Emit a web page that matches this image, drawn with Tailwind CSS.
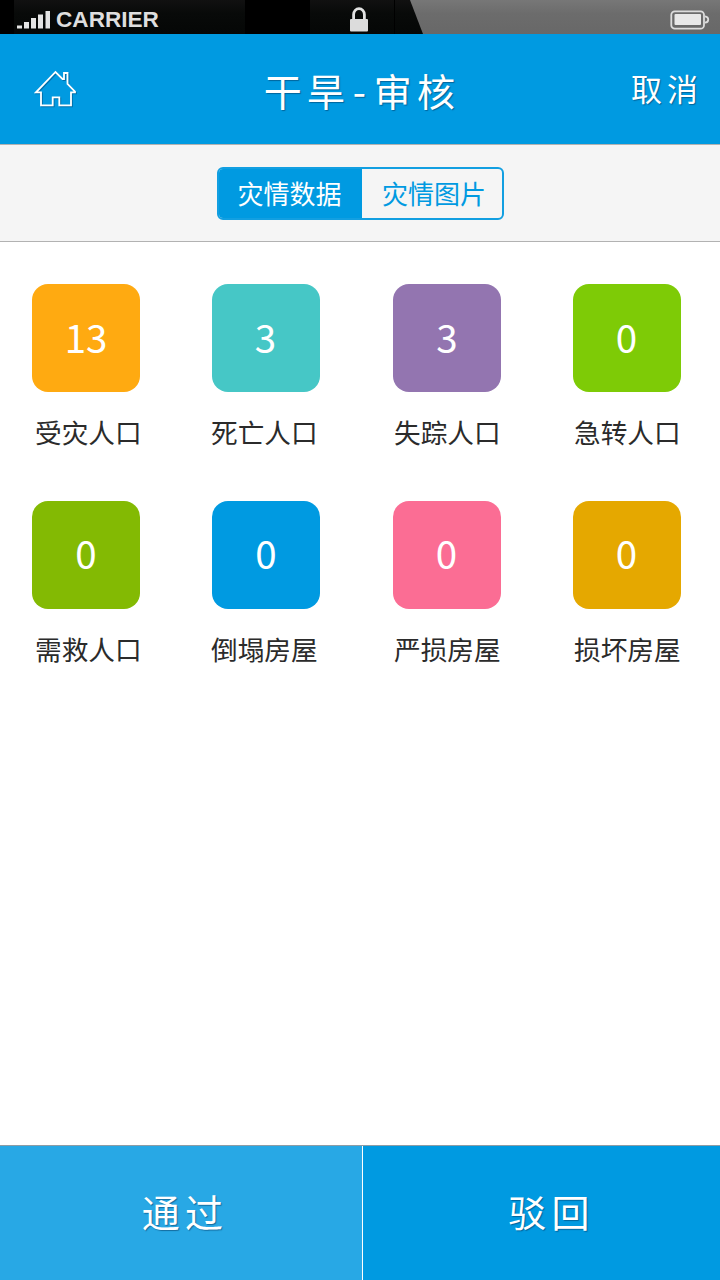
<!DOCTYPE html>
<html lang="zh-CN">
<head>
<meta charset="utf-8">
<meta name="viewport" content="width=720">
<title>干旱-审核</title>
<script src="https://cdn.jsdelivr.net/npm/@tailwindcss/browser@4"></script>
</head>
<body class="w-[720px] h-[1280px] flex flex-col overflow-hidden bg-white font-['Noto_Sans_CJK_SC',sans-serif]">

  <!-- Status bar -->
  <div class="grid h-[34px] shrink-0 grid-cols-1 grid-rows-1 bg-black">
    <svg class="col-start-1 row-start-1" width="720" height="34" viewBox="0 0 720 34">
      <defs>
        <linearGradient id="gray" x1="0" y1="0" x2="0" y2="1"><stop offset="0" stop-color="#777"/><stop offset=".4" stop-color="#6c6c6c"/><stop offset="1" stop-color="#686868"/></linearGradient>
        <linearGradient id="dark" x1="0" y1="0" x2="0" y2="1"><stop offset="0" stop-color="#111"/><stop offset=".4" stop-color="#080a09"/><stop offset="1" stop-color="#050706"/></linearGradient>
      </defs>
      <rect x="14" width="231" height="34" fill="url(#dark)"/>
      <rect x="310" width="113" height="34" fill="url(#dark)"/>
      <path d="M394.500 0V34" stroke="#000"/>
      <path d="M410 0H720V34H423Z" fill="url(#gray)"/>
    </svg>
    <div class="col-start-1 row-start-1 grid grid-cols-[333px_1fr_40px] items-start pl-4 pr-[10px]">
      <div class="flex gap-[5px]">
        <svg class="mt-[10px]" width="35" height="19" viewBox="0 0 35 19" fill="#e4e4e4">
          <rect x="1" y="15.500" width="5" height="3"/><rect x="8" y="12" width="5" height="6.500"/><rect x="15" y="8" width="5" height="10.500"/><rect x="22" y="4.500" width="5" height="14"/><rect x="29.500" y="1" width="4.500" height="17.500"/>
        </svg>
        <span class="mt-[8px] font-['Liberation_Sans',sans-serif] text-[22.6px] leading-[23px] font-bold text-[#dedede]">CARRIER</span>
      </div>
      <svg class="mt-[7px]" width="20" height="25" viewBox="0 0 20 25">
        <path d="M4.600 13V7.500a5.400 5.800 0 0 1 10.800 0V13" fill="none" stroke="#e2e2e2" stroke-width="2.800"/>
        <rect x="1" y="12" width="18" height="12.500" rx="1" fill="#dcdcdc"/>
      </svg>
      <svg class="mt-[9px]" width="40" height="22" viewBox="0 0 40 22">
        <rect x="1.300" y="2.300" width="32.700" height="17.400" rx="3.500" fill="none" stroke="#dcdcdc" stroke-width="1.800"/>
        <rect x="4.500" y="5" width="26.500" height="11" rx="1" fill="#e8e8e8"/>
        <path d="M35 7.300c4.300 .4 4.300 6 0 6.400" fill="none" stroke="#dcdcdc" stroke-width="1.800"/>
      </svg>
    </div>
  </div>

  <!-- Title bar -->
  <header class="grid h-[110px] shrink-0 grid-cols-[200px_1fr_200px] items-center bg-[#009ae1] text-white">
    <svg class="ml-[34px] drop-shadow-[1px_1px_0_rgba(0,50,90,0.4)]" width="44" height="40" viewBox="0 0 44 40" fill="none" stroke="#fff" stroke-width="1.800">
      <path d="M7 23.300H2L21.500 3L28.500 10H30V4H33.500V15L41 22.500V23.300H37V36.300H25.300V28.300H18.700V36.300H7Z"/>
    </svg>
    <h1 class="pl-[4px] pt-[2px] text-center text-[38px] leading-[44px] tracking-[5.300px] [text-shadow:1px_1px_1px_rgba(0,50,90,0.5)]">干旱<span class="mx-[2.500px]">-</span>审核</h1>
    <button class="pr-[17px] pb-[2px] text-right text-[31px] leading-[44px] tracking-[5px] [text-shadow:1px_1px_1px_rgba(0,50,90,0.5)]">取消</button>
  </header>

  <!-- Tabs -->
  <nav class="flex h-[98px] shrink-0 items-center justify-center border-y border-[#b2b2b2] bg-[#f5f5f5]">
    <div class="flex h-[53px] w-[287px] overflow-hidden rounded-[6px] border-2 border-[#129fe1] text-[26px] leading-[47px]">
      <button class="w-[143px] bg-[#009ae1] pr-px pb-[2px] text-white">灾情数据</button>
      <button class="flex-1 pb-[2px] pl-[5px] text-[#009ae1]">灾情图片</button>
    </div>
  </nav>

  <!-- Figures -->
  <main class="grid flex-1 grid-cols-[180px_181px_180px_179px] content-start pt-[42px] text-[38.500px] text-white">
    <section class="flex h-[217px] flex-col pl-8"><div class="flex size-[108px] items-center justify-center rounded-[16px] bg-[#ffaa11] pb-[3px]">13</div><p class="pl-[3px] pt-[20px] text-[26.67px] leading-[40px] whitespace-nowrap text-[#2b2b2b]">受灾人口</p></section>
    <section class="flex h-[217px] flex-col pl-8"><div class="flex size-[108px] items-center justify-center rounded-[16px] bg-[#46c7c6] pr-px pb-[3px]">3</div><p class="-ml-px pt-[20px] text-[26.67px] leading-[40px] whitespace-nowrap text-[#2b2b2b]">死亡人口</p></section>
    <section class="flex h-[217px] flex-col pl-8"><div class="flex size-[108px] items-center justify-center rounded-[16px] bg-[#9375b0] pb-[3px]">3</div><p class="pl-px pt-[20px] text-[26.67px] leading-[40px] whitespace-nowrap text-[#2b2b2b]">失踪人口</p></section>
    <section class="flex h-[217px] flex-col pl-8"><div class="flex size-[108px] items-center justify-center rounded-[16px] bg-[#7ecb06] pb-[3px] pr-px">0</div><p class="pl-px pt-[20px] text-[26.67px] leading-[40px] whitespace-nowrap text-[#2b2b2b]">急转人口</p></section>
    <section class="flex h-[217px] flex-col pl-8"><div class="flex size-[108px] items-center justify-center rounded-[16px] bg-[#83ba03] pb-[5px]">0</div><p class="pl-[3px] pt-[20px] text-[26.67px] leading-[40px] whitespace-nowrap text-[#2b2b2b]">需救人口</p></section>
    <section class="flex h-[217px] flex-col pl-8"><div class="flex size-[108px] items-center justify-center rounded-[16px] bg-[#009ae1] pb-[5px]">0</div><p class="-ml-px pt-[20px] text-[26.67px] leading-[40px] whitespace-nowrap text-[#2b2b2b]">倒塌房屋</p></section>
    <section class="flex h-[217px] flex-col pl-8"><div class="flex size-[108px] items-center justify-center rounded-[16px] bg-[#fb6d94] pb-[5px] pr-px">0</div><p class="pl-px pt-[20px] text-[26.67px] leading-[40px] whitespace-nowrap text-[#2b2b2b]">严损房屋</p></section>
    <section class="flex h-[217px] flex-col pl-8"><div class="flex size-[108px] items-center justify-center rounded-[16px] bg-[#e5a800] pb-[5px] pr-px">0</div><p class="pl-px pt-[20px] text-[26.67px] leading-[40px] whitespace-nowrap text-[#2b2b2b]">损坏房屋</p></section>
  </main>

  <!-- Actions -->
  <footer class="flex h-[135px] shrink-0 border-t border-[#8d9ca5] text-[38px] tracking-[5.300px] text-white">
    <button class="w-[363px] border-r border-white bg-[#28a8e5] pb-[5px] pl-[8px] [text-shadow:1px_1px_1px_rgba(0,50,90,0.5)]">通过</button>
    <button class="flex-1 bg-[#009ae1] pb-[5px] pl-[20px] [text-shadow:1px_1px_1px_rgba(0,50,90,0.5)]">驳回</button>
  </footer>
</body>
</html>
